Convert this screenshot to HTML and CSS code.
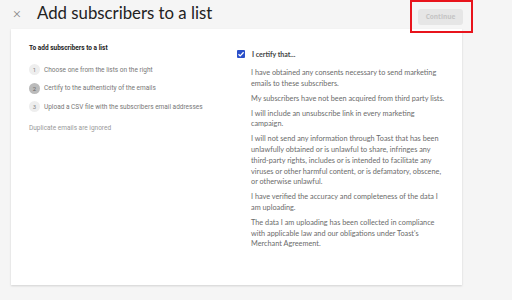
FILE: index.html
```html
<!DOCTYPE html>
<html lang="en">
<head>
    <meta charset="UTF-8">
    <title>Add subscribers to a list</title>
    <link rel="stylesheet" href="styles.css">
</head>
<body>
    <header class="topbar">
        <span class="close">&times;</span>
        <h1>Add subscribers to a list</h1>
        <div class="continue-wrap">
            <button class="continue" disabled>Continue</button>
        </div>
    </header>

    <main class="card">
        <section class="steps">
            <h2>To add subscribers to a list</h2>
            <ol>
                <li><span class="num">1</span>Choose one from the lists on the right</li>
                <li class="active"><span class="num">2</span>Certify to the authenticity of the emails</li>
                <li><span class="num">3</span>Upload a CSV file with the subscribers email addresses</li>
            </ol>
            <p class="note">Duplicate emails are ignored</p>
        </section>

        <section class="certify">
            <label class="check">
                <span class="box">
                    <svg width="8" height="8" viewBox="0 0 8 8"><path d="M1.5 4.2l1.7 1.7 3.4-3.6" fill="none" stroke="#fff" stroke-width="1.3"/></svg>
                </span>
                I certify that...
            </label>
            <div class="terms">
                <p>I have obtained any consents necessary to send marketing emails to these subscribers.</p>
                <p>My subscribers have not been acquired from third party lists.</p>
                <p>I will include an unsubscribe link in every marketing campaign.</p>
                <p>I will not send any information through Toast that has been unlawfully obtained or is unlawful to share, infringes any third-party rights, includes or is intended to facilitate any viruses or other harmful content, or is defamatory, obscene, or otherwise unlawful.</p>
                <p>I have verified the accuracy and completeness of the data I am uploading.</p>
                <p>The data I am uploading has been collected in compliance with applicable law and our obligations under Toast's Merchant Agreement.</p>
            </div>
        </section>
    </main>
</body>
</html>
```

FILE: styles.css
```css
body {
    margin: 0;
    background-color: #f5f5f5;
    font-family: Roboto, "Liberation Sans", sans-serif;
    color: #333;
    width: 512px;
    height: 300px;
    overflow: hidden;
}
.topbar {
    display: flex;
    align-items: center;
    height: 25px;
    padding: 0 0 0 13px;
}
.close {
    font-size: 15px;
    color: #888;
    width: 24px;
    font-weight: 300;
}
h1 {
    margin: 0;
    font-family: Lato, sans-serif;
    font-weight: 400;
    font-size: 16.8px;
    color: #222;
    flex-grow: 1;
}
.continue-wrap {
    border: 2px solid #e8141c;
    margin-right: 39px;
    padding: 2px 8px 6px 6px;
    align-self: flex-start;
}
.continue {
    background-color: #e6e6e6;
    color: #c4c4c4;
    border: none;
    border-radius: 3px;
    font-family: "Open Sans", sans-serif;
    font-weight: 700;
    font-size: 6.5px;
    width: 45px;
    height: 16px;
    padding: 0;
}
.card {
    display: flex;
    background: #fff;
    margin: 4px 50px 0 11px;
    height: 256px;
    box-shadow: 0 1px 2px rgba(0,0,0,0.15);
}
.steps {
    width: 208px;
    padding: 15px 0 0 18px;
}
h2 {
    margin: 0 0 12px;
    font-size: 6.5px;
    font-weight: 700;
    color: #222;
}
ol {
    list-style: none;
    margin: 0;
    padding: 0;
}
li {
    display: flex;
    align-items: center;
    font-size: 6.5px;
    color: #777;
    height: 11px;
    margin-bottom: 7.5px;
}
.num {
    width: 11px;
    height: 11px;
    border-radius: 50%;
    background: #eee;
    color: #888;
    font-size: 6px;
    display: flex;
    align-items: center;
    justify-content: center;
    margin-right: 4px;
}
.active .num {
    background: #bbb;
    color: #666;
}
.note {
    margin: 12px 0 0;
    font-size: 6.5px;
    color: #999;
}
.certify {
    padding: 21px 0 0 0;
    width: 212px;
}
.check {
    display: flex;
    align-items: center;
    font-family: Lato, sans-serif;
    font-weight: 700;
    font-size: 7px;
    color: #444;
}
.box {
    width: 8px;
    height: 8px;
    background: #2a4fc9;
    border-radius: 1px;
    margin-right: 7px;
    display: flex;
}
.terms {
    width: 196px;
    padding: 10px 0 0 14px;
    font-family: Lato, sans-serif;
    font-size: 7.3px;
    line-height: 10.7px;
    color: #6b6b6b;
}
.terms p {
    margin: 0 0 4.3px;
}
```
